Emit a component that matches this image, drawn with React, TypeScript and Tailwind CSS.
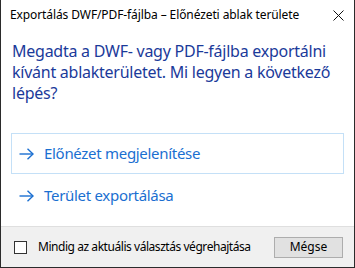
import React from 'react'

function Arrow() {
  return (
    <svg width="15" height="12" viewBox="0 0 15 12" fill="none" stroke="#1a6fd1" strokeWidth="1.4">
      <path d="M0.5 6H14" />
      <path d="M8.5 0.8L14 6L8.5 11.2" />
    </svg>
  )
}

export default function App() {
  const font = { fontFamily: '"Noto Sans", "Open Sans", sans-serif' }
  return (
    <div style={font} className="w-[355px] h-[268px] bg-white border-x border-b border-[#2b2b2b] flex flex-col overflow-hidden">
      <div className="h-[30px] flex items-center justify-between pl-[9px] pr-[10px] shrink-0">
        <span className="text-[12px] text-black tracking-[-0.1px]">Exportálás DWF/PDF-fájlba – Előnézeti ablak területe</span>
        <svg width="11" height="11" viewBox="0 0 11 11" stroke="#111" strokeWidth="1">
          <path d="M0.5 0.5L10.5 10.5M10.5 0.5L0.5 10.5" />
        </svg>
      </div>

      <div className="flex-1 flex flex-col px-[10px]">
        <p className="mt-[11px] pl-[1px] text-[16px] leading-[21px] text-[#1b3a9a] tracking-[-0.25px]">
          Megadta a DWF- vagy PDF-fájlba exportálni<br />
          kívánt ablakterületet. Mi legyen a következő<br />
          lépés?
        </p>

        <div className="mt-[29px] flex flex-col">
          <button className="h-[41px] border border-[#c4e0f7] flex items-center gap-[10px] pl-[7px] text-left">
            <Arrow />
            <span className="text-[15px] text-[#1a6fd1] tracking-[-0.3px]">Előnézet megjelenítése</span>
          </button>
          <button className="h-[43px] border border-transparent flex items-center gap-[10px] pl-[7px] text-left">
            <Arrow />
            <span className="text-[15px] text-[#1a6fd1] tracking-[-0.3px]">Terület exportálása</span>
          </button>
        </div>
      </div>

      <div className="h-[41px] shrink-0 bg-[#f0f0f0] border-t border-[#dfdfdf] flex items-center pl-[13px] pr-[11px]">
        <div className="w-[13px] h-[13px] border border-[#333] bg-white shrink-0" />
        <span className="ml-[11px] text-[12px] text-black tracking-[-0.45px]">Mindig az aktuális választás végrehajtása</span>
        <button className="ml-auto w-[69px] h-[21px] bg-[#e1e1e1] border border-[#adadad] text-[12px] text-black flex items-center justify-center">
          Mégse
        </button>
      </div>
    </div>
  )
}
